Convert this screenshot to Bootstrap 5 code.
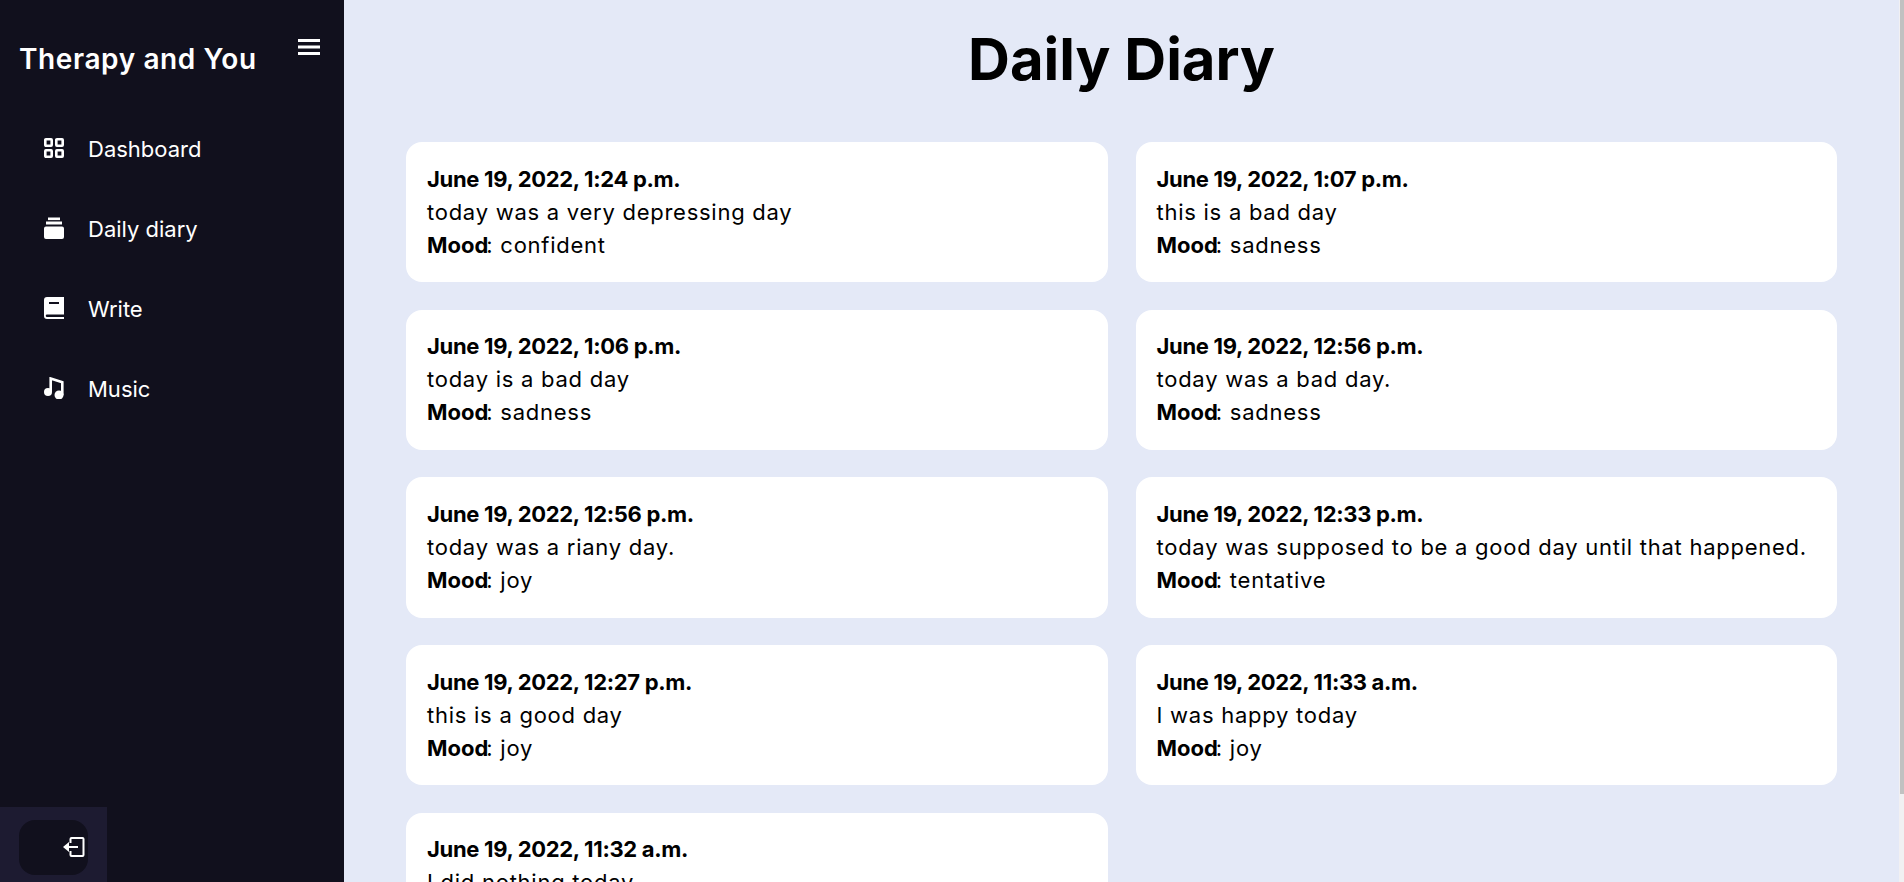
<!DOCTYPE html>
<html lang="en">
<head>
  <meta charset="UTF-8" />
  <meta name="viewport" content="width=device-width, initial-scale=1.0" />
  <title>Daily Diary</title>
  <link href="https://cdn.jsdelivr.net/npm/bootstrap@5.3.0/dist/css/bootstrap.min.css" rel="stylesheet">
  <style>
    html, body { height: 100%; }
    body {
      overflow: hidden;
      font-family: "Inter", "Liberation Sans", sans-serif;
      background: #e4e9f7;
      color: #000;
    }
    .side-panel {
      width: 344px;
      height: 100vh;
      background: #11101d;
      color: #fff;
    }
    .brand-row { height: 109px; padding: 42px 0 0 19px; }
    .brand-name { font-size: 28px; font-weight: 600; line-height: 34px; letter-spacing: .6px; }
    .burger { position: absolute; left: 298px; top: 39px; }
    .side-link {
      height: 80px;
      padding-left: 44px;
      color: #fff;
      text-decoration: none;
      font-size: 22px;
      gap: 24px;
    }
    .side-link svg { width: 20px; height: 22px; flex: none; margin-bottom: 2px; }
    .logout-strip { width: 107px; height: 75px; background: #1d1b31; padding: 13px 19px; }
    .logout-btn { width: 69px; height: 55px; border-radius: 16px; background: #11101d; padding: 17px 0 0 44px; }
    .logout-btn svg { display: block; }
    .main-pane { height: 100vh; overflow: hidden; }
    .scroll-rail { width: 5px; height: 100vh; background: #f1f0f2; padding-left: 1px; }
    .scroll-grip { height: 794px; background: #c1c1c1; }
    .page-title { font-size: 58px; font-weight: 700; line-height: 84px; margin: 17px 0 41px; }
    .entry-wrap { padding: 0 62px 28px; }
    .entry-grid { --bs-gutter-x: 28px; --bs-gutter-y: 27.5px; }
    .entry-box {
      height: 140.2px;
      padding: 20.6px 21px 0;
      border-radius: 16px;
      background: #fff;
      font-size: 22px;
      line-height: 33px;
      letter-spacing: .74px;
    }
    .entry-box b { font-weight: 700; letter-spacing: 0; margin-right: -2px; }
    .entry-box b.entry-date { letter-spacing: -.32px; margin-right: 0; }
  </style>
</head>
<body class="d-flex">
  <!-- Sidebar -->
  <aside class="side-panel d-flex flex-column flex-shrink-0 position-relative">
    <div class="brand-row"><span class="brand-name">Therapy and You</span></div>
    <svg class="burger" width="22" height="16" viewBox="0 0 22 16" fill="#fff" aria-hidden="true"><rect y="0" width="22" height="3"/><rect y="6.500" width="22" height="3"/><rect y="13" width="22" height="3"/></svg>
    <a href="#" class="side-link d-flex align-items-center">
      <svg viewBox="0 0 20 22" fill="none" stroke="#fff" stroke-width="2.6"><rect x="1.3" y="2.300" width="6.400" height="6.400" rx=".6"/><rect x="12.300" y="2.300" width="6.400" height="6.400" rx=".6"/><rect x="1.3" y="13.300" width="6.400" height="6.400" rx=".6"/><rect x="12.300" y="13.300" width="6.400" height="6.400" rx=".6"/></svg>
      Dashboard
    </a>
    <a href="#" class="side-link d-flex align-items-center">
      <svg viewBox="0 0 20 22" fill="#fff"><rect x="4" y="0.500" width="12" height="2.600"/><rect x="2" y="4.500" width="16" height="3"/><path d="M2 9.500h16a2 2 0 0 1 2 2V20a2 2 0 0 1-2 2H2a2 2 0 0 1-2-2v-8.500a2 2 0 0 1 2-2z"/></svg>
      Daily diary
    </a>
    <a href="#" class="side-link d-flex align-items-center">
      <svg viewBox="0 0 20 22" fill="#fff"><path d="M3 0h17v17.500H3a1.250 1.250 0 0 0 0 2.500h17v2H3a3 3 0 0 1-3-3V3a3 3 0 0 1 3-3z"/><rect x="5" y="5" width="10" height="2" fill="#11101d"/></svg>
      Write
    </a>
    <a href="#" class="side-link d-flex align-items-center">
      <svg viewBox="0 0 20 22"><circle cx="4" cy="15" r="4" fill="#fff"/><circle cx="15" cy="18" r="4.500" fill="#fff"/><path d="M6.700 15V1.500L18.300 5.200v13" fill="none" stroke="#fff" stroke-width="2.600"/></svg>
      Music
    </a>
    <div class="logout-strip mt-auto">
      <div class="logout-btn">
        <svg width="22" height="20" viewBox="0 0 22 20" fill="none" stroke="#fff" stroke-width="2"><path d="M7.500 6V2a1 1 0 0 1 1-1h11a1 1 0 0 1 1 1v16a1 1 0 0 1-1 1h-11a1 1 0 0 1-1-1v-4"/><path d="M4 10h11"/><path d="M6 5 0 10l6 5z" fill="#fff" stroke="none"/></svg>
      </div>
    </div>
  </aside>

  <!-- Diary entries -->
  <main class="main-pane flex-grow-1">
    <h1 class="page-title text-center">Daily Diary</h1>
    <div class="entry-wrap">
      <div class="row row-cols-2 entry-grid">
        <div class="col"><div class="entry-box"><b class="entry-date">June 19, 2022, 1:24 p.m.</b><br>today was a very depressing day<br><b>Mood</b>: confident</div></div>
        <div class="col"><div class="entry-box"><b class="entry-date">June 19, 2022, 1:07 p.m.</b><br>this is a bad day<br><b>Mood</b>: sadness</div></div>
        <div class="col"><div class="entry-box"><b class="entry-date">June 19, 2022, 1:06 p.m.</b><br>today is a bad day<br><b>Mood</b>: sadness</div></div>
        <div class="col"><div class="entry-box"><b class="entry-date">June 19, 2022, 12:56 p.m.</b><br>today was a bad day.<br><b>Mood</b>: sadness</div></div>
        <div class="col"><div class="entry-box"><b class="entry-date">June 19, 2022, 12:56 p.m.</b><br>today was a riany day.<br><b>Mood</b>: joy</div></div>
        <div class="col"><div class="entry-box"><b class="entry-date">June 19, 2022, 12:33 p.m.</b><br>today was supposed to be a good day until that happened.<br><b>Mood</b>: tentative</div></div>
        <div class="col"><div class="entry-box"><b class="entry-date">June 19, 2022, 12:27 p.m.</b><br>this is a good day<br><b>Mood</b>: joy</div></div>
        <div class="col"><div class="entry-box"><b class="entry-date">June 19, 2022, 11:33 a.m.</b><br>I was happy today<br><b>Mood</b>: joy</div></div>
        <div class="col"><div class="entry-box"><b class="entry-date">June 19, 2022, 11:32 a.m.</b><br>I did nothing today<br><b>Mood</b>: joy</div></div>
      </div>
    </div>
  </main>
  <div class="scroll-rail flex-shrink-0"><div class="scroll-grip"></div></div>
  <script src="https://cdn.jsdelivr.net/npm/bootstrap@5.3.0/dist/js/bootstrap.bundle.min.js"></script>
</body>
</html>
